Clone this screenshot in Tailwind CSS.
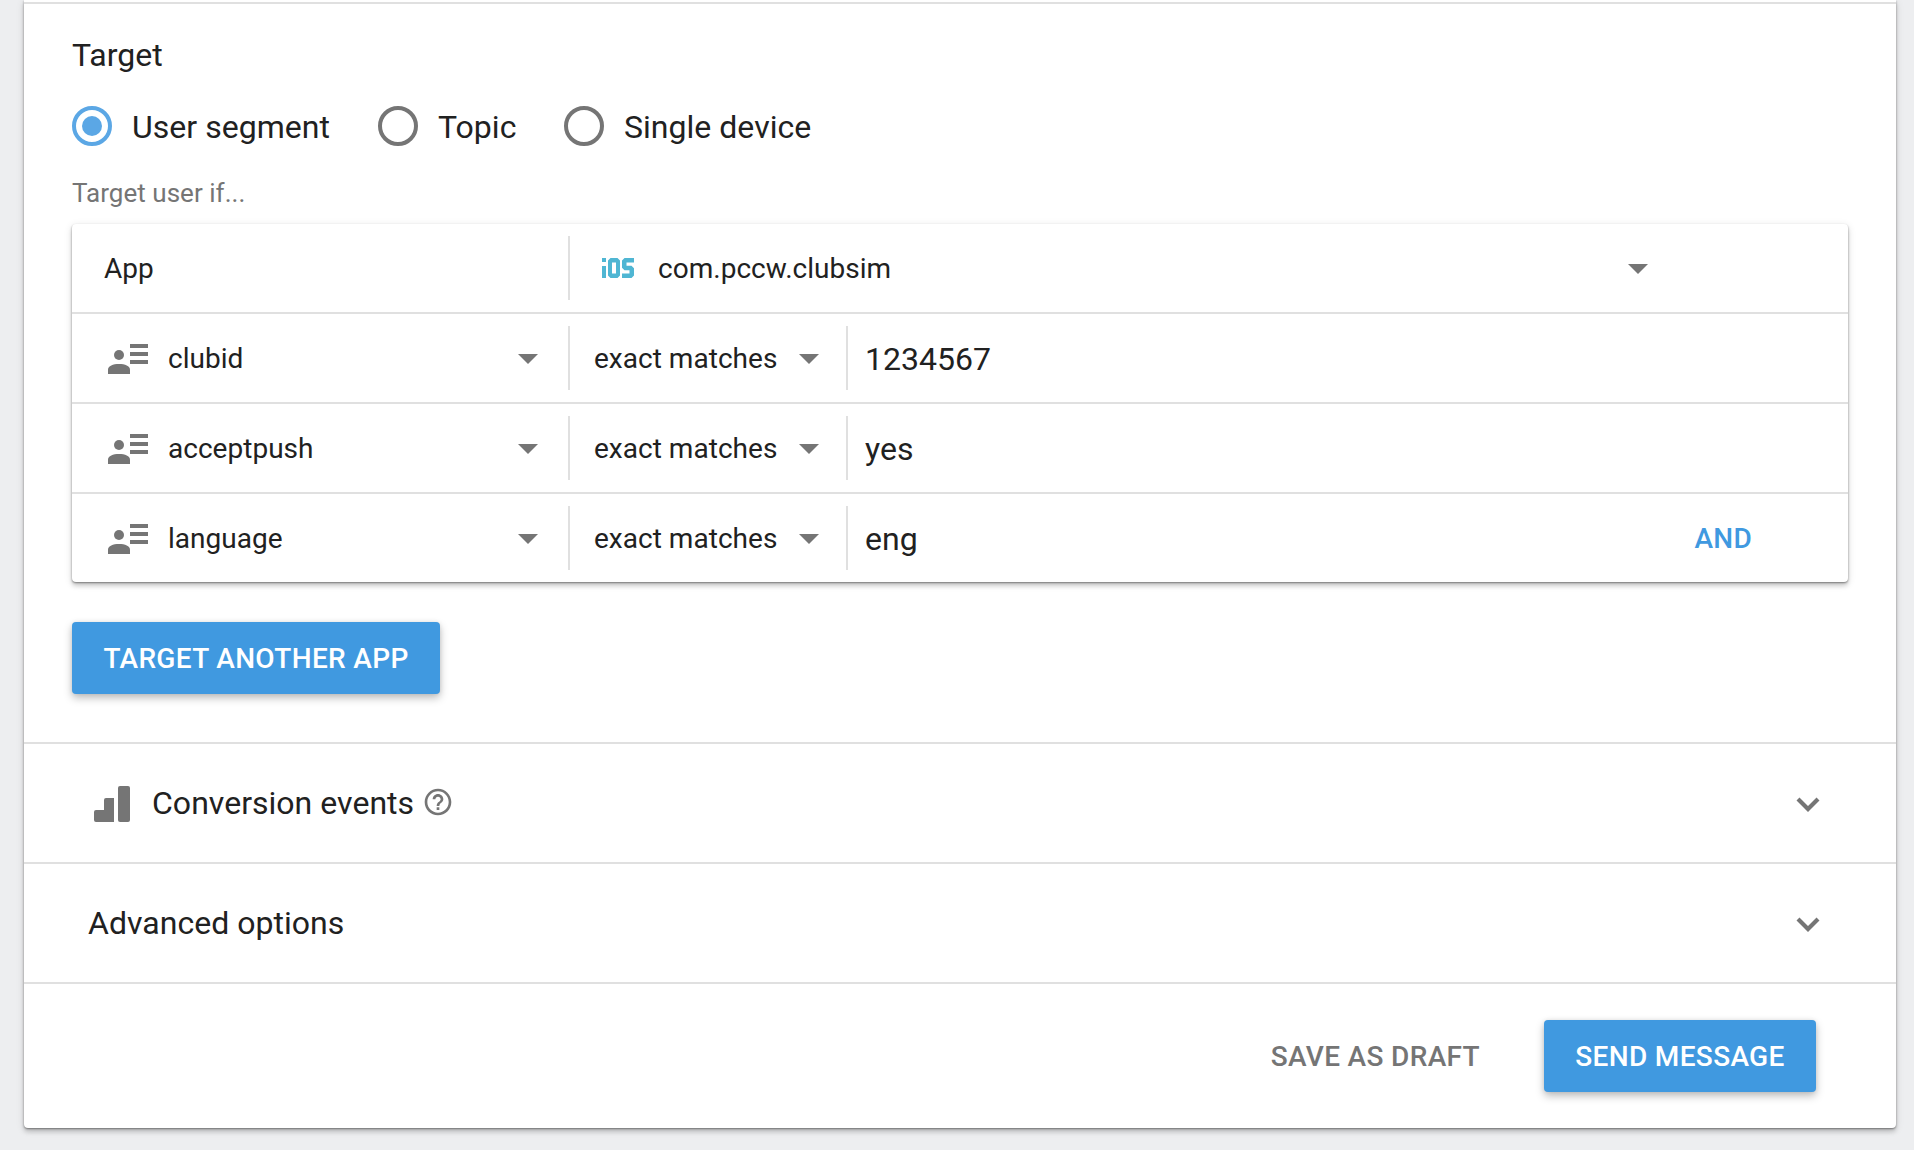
<!DOCTYPE html>
<html lang="en">
<head>
<meta charset="utf-8">
<title>Compose message</title>
<script src="https://cdn.jsdelivr.net/npm/@tailwindcss/browser@4"></script>
</head>
<body class="bg-[#edeef0] h-[1150px] overflow-hidden px-6 pr-[18px] font-[Roboto,sans-serif] text-[#212121] tracking-[0.0015em]">
<svg class="hidden">
  <symbol id="person" viewBox="0 0 40 30"><path d="M22 0h18v4H22zM22 8h18v4H22zM22 16h18v4H22z"/><circle cx="11" cy="11" r="5"/><path d="M0 30v-4.500C0 22 5 20 11 20s11 2 11 5.500V30z"/></symbol>
  <symbol id="caret" viewBox="0 0 20 10"><path d="M0 0h20L10 10z"/></symbol>
  <symbol id="chevron" viewBox="0 0 24 15"><path d="M2 2l10 10L22 2" fill="none" stroke="currentColor" stroke-width="4.200"/></symbol>
</svg>
<main class="h-[1128px] bg-white rounded-b-[4px] shadow-[0_4px_4px_0_rgba(0,0,0,0.14),0_2px_8px_0_rgba(0,0,0,0.12),0_1px_2px_0_rgba(0,0,0,0.4)] flex flex-col">
  <div class="h-1 border-b-2 border-[#e0e0e0]"></div>
  <section class="h-[740px] border-b-2 border-[#e0e0e0] px-12 flex flex-col items-stretch">
    <h2 class="mt-[31px] h-10 leading-10 text-[32px]">Target</h2>
    <div class="mt-[31px] h-10 flex items-center text-[32px]">
      <span class="size-10 rounded-full border-4 border-[#5ba7e5] flex items-center justify-center"><span class="size-5 rounded-full bg-[#5ba7e5]"></span></span>
      <span class="ml-5 w-[246px] leading-10 pt-0.5">User segment</span>
      <span class="size-10 rounded-full border-4 border-[#757575]"></span>
      <span class="ml-5 w-[126px] leading-10 pt-0.5">Topic</span>
      <span class="size-10 rounded-full border-4 border-[#757575]"></span>
      <span class="ml-5 leading-10 pt-0.5">Single device</span>
    </div>
    <p class="mt-[31px] h-8 leading-8 text-[26px] text-[#757575]">Target user if...</p>
    <div class="mt-[15px] h-[358px] shrink-0 rounded-[4px] bg-white shadow-[0_4px_4px_0_rgba(0,0,0,0.14),0_2px_8px_0_rgba(0,0,0,0.12),0_1px_2px_0_rgba(0,0,0,0.4)] text-[28px]">
      <div class="h-[90px] border-b-2 border-[#e0e0e0] flex items-center">
        <div class="w-[498px] h-16 border-r-2 border-[#e0e0e0] pl-8 pt-0.5 flex items-center">App</div>
        <svg class="ml-8 w-8 h-5" viewBox="0 0 32 20" fill="#4fb6d3"><path d="M0 0h4v4H0zM0 8h4v12H0z"/><path fill-rule="evenodd" d="M8.500 0h7L18 2.500v15L15.500 20h-7L6 17.500v-15zM10 4.500v11h4v-11z"/><path d="M22.500 0H32v4.500h-7.500v3.200h5L32 10.200v7.300L29.500 20H20v-4.500h7.500v-3.300h-5L20 9.700V2.500z"/></svg>
        <span class="ml-6 w-[970px] pt-0.5">com.pccw.clubsim</span>
        <svg class="w-5 h-2.5 mt-0.5 fill-[#757575]"><use href="#caret"/></svg>
      </div>
      <div class="h-[90px] border-b-2 border-[#e0e0e0] flex items-center">
        <div class="w-[498px] h-16 border-r-2 border-[#e0e0e0] pl-9 pr-[30px] flex items-center">
          <svg class="w-10 h-[30px] mt-0.5 fill-[#757575]"><use href="#person"/></svg><span class="ml-5 flex-1 pt-0.5">clubid</span><svg class="w-5 h-2.5 mt-0.5 fill-[#757575]"><use href="#caret"/></svg>
        </div>
        <div class="w-[278px] h-16 border-r-2 border-[#e0e0e0] pl-6 pr-[27px] flex items-center justify-between"><span class="pt-0.5">exact matches</span><svg class="w-5 h-2.5 mt-0.5 fill-[#757575]"><use href="#caret"/></svg></div>
        <span class="pl-[17px] pt-0.5 text-[32px]">1234567</span>
      </div>
      <div class="h-[90px] border-b-2 border-[#e0e0e0] flex items-center">
        <div class="w-[498px] h-16 border-r-2 border-[#e0e0e0] pl-9 pr-[30px] flex items-center">
          <svg class="w-10 h-[30px] mt-0.5 fill-[#757575]"><use href="#person"/></svg><span class="ml-5 flex-1 pt-0.5">acceptpush</span><svg class="w-5 h-2.5 mt-0.5 fill-[#757575]"><use href="#caret"/></svg>
        </div>
        <div class="w-[278px] h-16 border-r-2 border-[#e0e0e0] pl-6 pr-[27px] flex items-center justify-between"><span class="pt-0.5">exact matches</span><svg class="w-5 h-2.5 mt-0.5 fill-[#757575]"><use href="#caret"/></svg></div>
        <span class="pl-[17px] pt-0.5 text-[32px]">yes</span>
      </div>
      <div class="h-[88px] flex items-center">
        <div class="w-[498px] h-16 border-r-2 border-[#e0e0e0] pl-9 pr-[30px] flex items-center">
          <svg class="w-10 h-[30px] mt-0.5 fill-[#757575]"><use href="#person"/></svg><span class="ml-5 flex-1 pt-0.5">language</span><svg class="w-5 h-2.5 mt-0.5 fill-[#757575]"><use href="#caret"/></svg>
        </div>
        <div class="w-[278px] h-16 border-r-2 border-[#e0e0e0] pl-6 pr-[27px] flex items-center justify-between"><span class="pt-0.5">exact matches</span><svg class="w-5 h-2.5 mt-0.5 fill-[#757575]"><use href="#caret"/></svg></div>
        <span class="pl-[17px] pt-0.5 text-[32px] flex-1">eng</span>
        <button class="mr-24 pt-0.5 font-medium tracking-[0.01em] text-[#4099e0]">AND</button>
      </div>
    </div>
    <button class="mt-10 w-[368px] h-[72px] pt-0.5 shrink-0 rounded-[4px] bg-[#4099e0] text-white text-[28px] font-medium tracking-[0.012em] shadow-[0_4px_8px_0_rgba(0,0,0,0.26),0_0_4px_0_rgba(0,0,0,0.08)]">TARGET ANOTHER APP</button>
  </section>
  <section class="h-[120px] border-b-2 border-[#e0e0e0] pl-[70px] pr-[76px] flex items-center text-[32px]">
    <svg class="size-9 mt-0.5" viewBox="0 0 36 36" fill="#757575"><path d="M2 24h8V14q0-2 2-2h8v24H2q-2 0-2-2v-8q0-2 2-2z"/><path d="M26 0h8q2 0 2 2v32q0 2-2 2h-8q-2 0-2-2V2q0-2 2-2z"/></svg>
    <h2 class="ml-[22px]">Conversion events</h2>
    <svg class="ml-[8px] -mt-0.5 size-8" viewBox="0 0 24 24" fill="#757575"><path d="M11 18h2v-2h-2v2zm1-16C6.480 2 2 6.480 2 12s4.480 10 10 10 10-4.480 10-10S17.520 2 12 2zm0 18c-4.410 0-8-3.590-8-8s3.590-8 8-8 8 3.590 8 8-3.590 8-8 8zm0-14c-2.210 0-4 1.790-4 4h2c0-1.100.9-2 2-2s2 .9 2 2c0 2-3 1.750-3 5h2c0-2.250 3-2.500 3-5 0-2.210-1.790-4-4-4z"/></svg>
    <svg class="ml-auto mt-0.5 w-6 h-[15px] text-[#757575]"><use href="#chevron"/></svg>
  </section>
  <section class="h-[120px] border-b-2 border-[#e0e0e0] pl-16 pr-[76px] flex items-center text-[32px]">
    <h2>Advanced options</h2>
    <svg class="ml-auto mt-0.5 w-6 h-[15px] text-[#757575]"><use href="#chevron"/></svg>
  </section>
  <footer class="flex-1 pr-20 flex items-center justify-end text-[28px] font-medium tracking-[0.012em]">
    <button class="mr-16 pt-0.5 text-[#757575]">SAVE AS DRAFT</button>
    <button class="w-[272px] h-[72px] pt-0.5 rounded-[4px] bg-[#4099e0] text-white shadow-[0_4px_8px_0_rgba(0,0,0,0.26),0_0_4px_0_rgba(0,0,0,0.08)]">SEND MESSAGE</button>
  </footer>
</main>
</body>
</html>
